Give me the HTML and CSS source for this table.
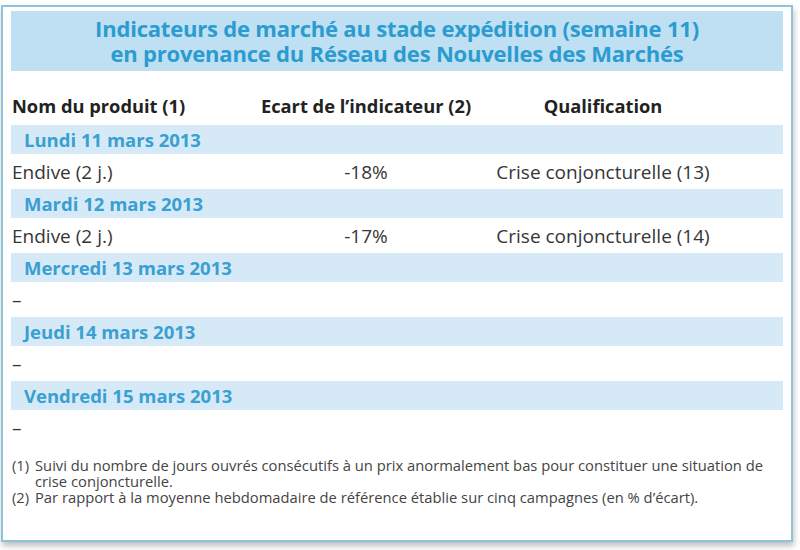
FILE: index.html
```html
<!DOCTYPE html>
<html lang="fr">
<head>
<meta charset="utf-8">
<title>Indicateurs de marché</title>
<link rel="stylesheet" href="styles.css">
</head>
<body>
<div class="page">
  <div class="box">
    <div class="title">
      <div>Indicateurs de marché au stade expédition (semaine 11)</div>
      <div>en provenance du Réseau des Nouvelles des Marchés</div>
    </div>
    <div class="row head">
      <div class="c1">Nom du produit (1)</div>
      <div class="c2">Ecart de l’indicateur (2)</div>
      <div class="c3">Qualification</div>
    </div>
    <div class="day">Lundi 11 mars 2013</div>
    <div class="row data">
      <div class="c1">Endive (2 j.)</div>
      <div class="c2">-18%</div>
      <div class="c3">Crise conjoncturelle (13)</div>
    </div>
    <div class="day">Mardi 12 mars 2013</div>
    <div class="row data">
      <div class="c1">Endive (2 j.)</div>
      <div class="c2">-17%</div>
      <div class="c3">Crise conjoncturelle (14)</div>
    </div>
    <div class="day">Mercredi 13 mars 2013</div>
    <div class="row data"><div class="c1">–</div></div>
    <div class="day">Jeudi 14 mars 2013</div>
    <div class="row data"><div class="c1">–</div></div>
    <div class="day">Vendredi 15 mars 2013</div>
    <div class="row data"><div class="c1">–</div></div>
    <div class="notes">
      <div class="note"><span class="num">(1)</span><span>Suivi du nombre de jours ouvrés consécutifs à un prix anormalement bas pour constituer une situation de crise conjoncturelle.</span></div>
      <div class="note"><span class="num">(2)</span><span>Par rapport à la moyenne hebdomadaire de référence établie sur cinq campagnes (en % d’écart).</span></div>
    </div>
  </div>
</div>
</body>
</html>
```
FILE: styles.css
```css
html, body {
  margin: 0;
  padding: 0;
  background: #ffffff;
}
body {
  width: 800px;
  height: 550px;
  overflow: hidden;
  font-family: "Open Sans", Lato, sans-serif;
}
.page {
  padding: 5px 0 0 1px;
}
.box {
  box-sizing: border-box;
  width: 792px;
  height: 537px;
  border: 2px solid #8fc3d5;
  padding: 4px 8px 0 8px;
  background: #ffffff;
  box-shadow: 1px 4px 6px rgba(0, 0, 0, 0.25);
}
.title {
  background: #bee0f2;
  height: 60px;
  box-sizing: border-box;
  padding-top: 5px;
  text-align: center;
  color: #2b9bd0;
  font-weight: 700;
  font-size: 22px;
  line-height: 25px;
  letter-spacing: -0.2px;
}
.row {
  display: grid;
  grid-template-columns: 230px 250px 224px 1fr;
  align-items: center;
}
.c1 { padding-left: 1px; }
.c2, .c3 { text-align: center; }
.head {
  height: 54px;
  padding-top: 14px;
  box-sizing: border-box;
  font-weight: 700;
  font-size: 18.3px;
  color: #222;
}
.day {
  height: 29px;
  background: #d5eaf6;
  color: #3a9fd2;
  font-weight: 700;
  font-size: 18.5px;
  line-height: 29px;
  padding-left: 13px;
}
.data {
  height: 35px;
  font-size: 19px;
  color: #363636;
}
.notes {
  padding-top: 12px;
  font-size: 14.75px;
  line-height: 16px;
  color: #444;
}
.note {
  display: flex;
}
.note .num {
  flex: 0 0 auto;
  width: 23px;
  padding-left: 1px;
}
.note span:last-child {
  flex: 1;
  padding-right: 15px;
}
```
